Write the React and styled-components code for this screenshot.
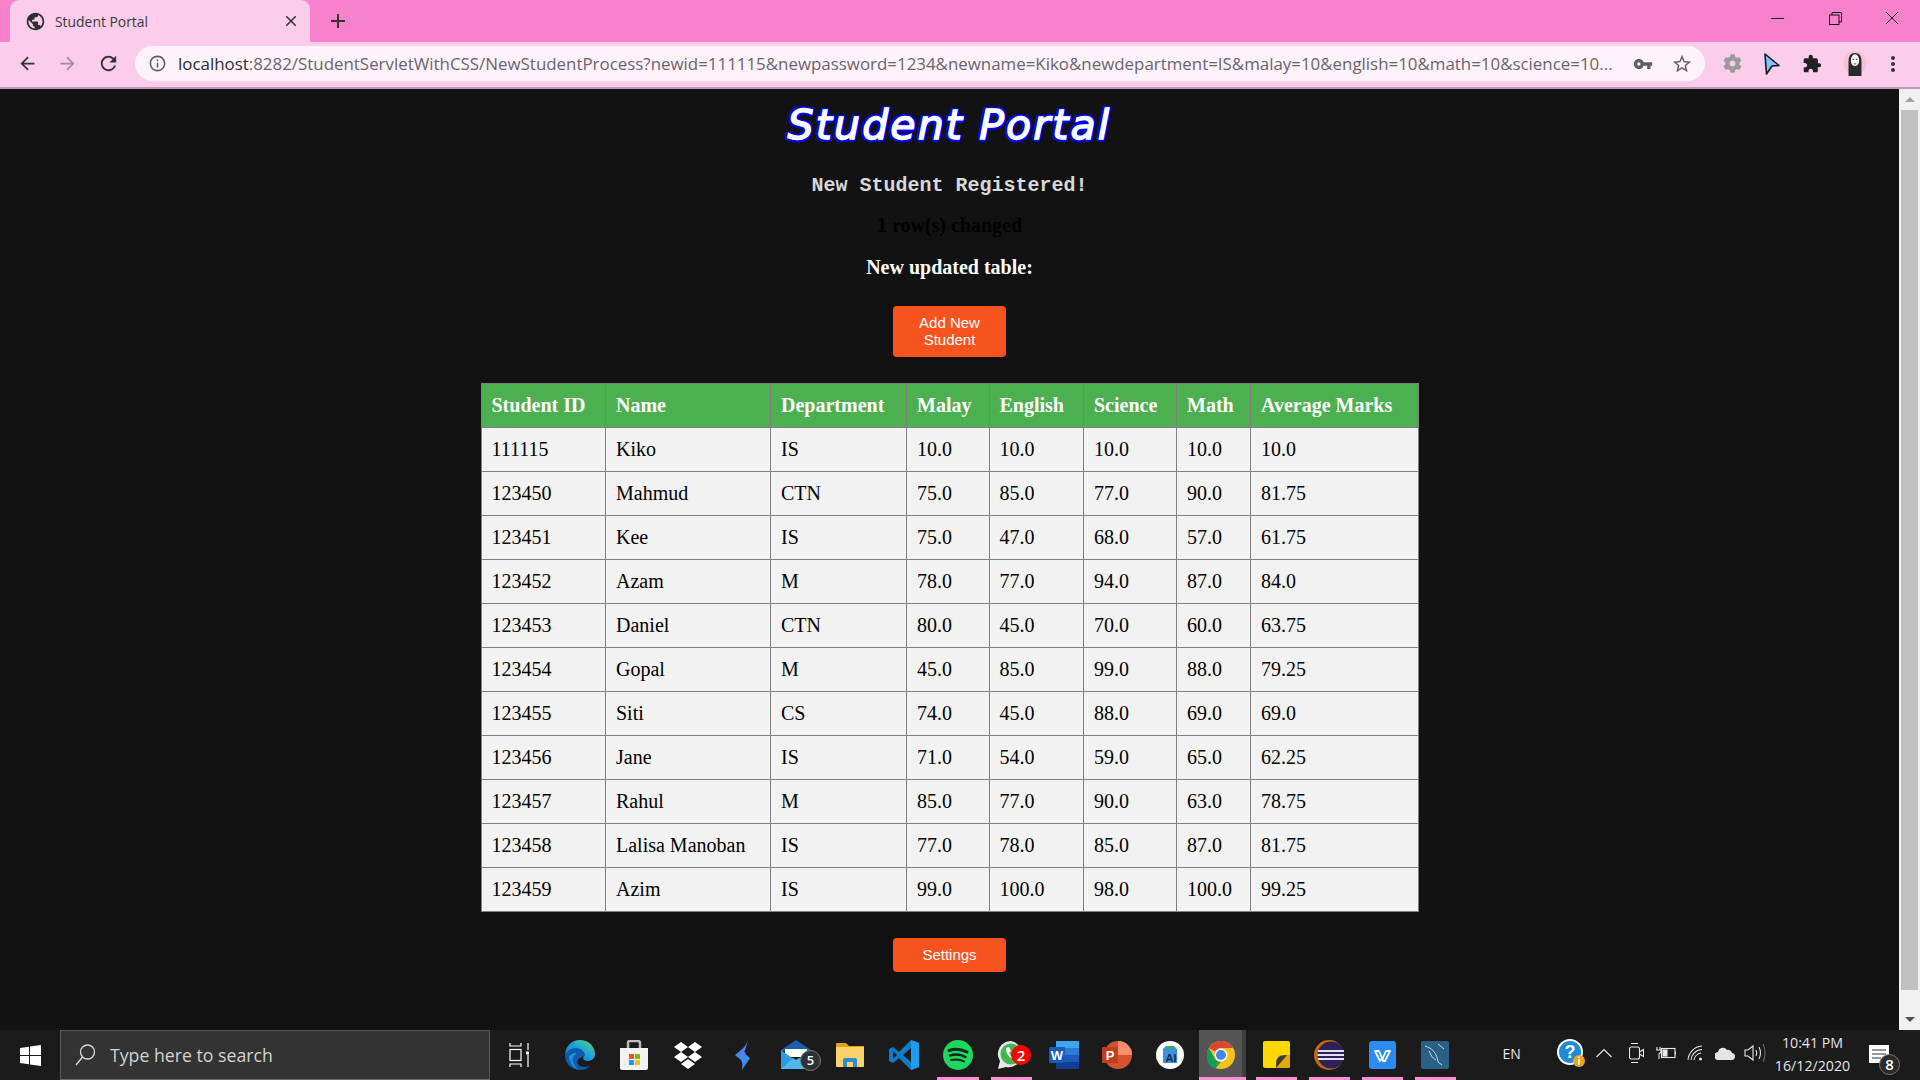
import React from "react";
import styled, { createGlobalStyle } from "styled-components";
import { MdPublic, MdClose, MdAdd, MdArrowBack, MdArrowForward, MdRefresh, MdInfoOutline, MdVpnKey, MdStarBorder, MdExtension, MdMoreVert } from "react-icons/md";
import { FaCog } from "react-icons/fa";

const Global = createGlobalStyle`
  html, body { margin: 0; padding: 0; height: 100%; overflow: hidden; background: #121212; }
  #root { height: 100%; }
  * { box-sizing: border-box; }
`;
const UI = `"Open Sans", "Noto Sans", sans-serif`;

const Screen = styled.div`display: flex; flex-direction: column; width: 1920px; height: 1080px;`;

const TabStrip = styled.div`display: flex; align-items: flex-end; height: 42px; background: #f982cc; padding-left: 10px; flex: none;`;
const Tab = styled.div`
  display: flex; align-items: center; width: 300px; height: 42px; background: #fbcdeb;
  border-radius: 9px 9px 0 0; padding: 0 10px 0 15px; color: #3a3a3a; font: 13.9px ${UI};
`;
const TabTitle = styled.span`flex: 1; margin-left: 9px;`;
const NewTab = styled.div`display: flex; height: 42px; align-items: center; margin-left: 16px; color: #333;`;
const WindowControls = styled.div`display: flex; margin-left: auto; height: 42px; align-items: center; gap: 43.5px; padding: 0 21px 6px 0;`;

const Toolbar = styled.div`
  display: flex; align-items: center; height: 47px; flex: none; background: #fbcdeb;
  border-bottom: 2px solid #bd9ab2; padding: 0 0 2px 17px;
`;
const NavButton = styled.div`display: flex; width: 40px; justify-content: flex-start; color: ${p => p.$dim ? "#a98a9f" : "#333"};`;
const Omnibox = styled.div`
  display: flex; align-items: center; width: 1570px; height: 35px; margin-left: -2px; border-radius: 18px;
  background: #fef3fb; padding: 0 12px 0 13px; flex: none;
`;
const Url = styled.div`
  flex: 1; margin-left: 11px; color: #6c6270; font: 16.9px ${UI}; white-space: nowrap; overflow: hidden;
  b { font-weight: 400; color: #2c2c2c; }
`;
const OmniIcons = styled.div`display: flex; align-items: center; gap: 18.5px; color: #5f5f5f; margin-left: 17px;`;
const Extensions = styled.div`display: flex; align-items: center; margin-left: 18px; gap: 21px; color: #222;`;

const Body = styled.div`flex: 1; display: flex; min-height: 0; background: #121212;`;
const Page = styled.main`flex: 1; display: flex; flex-direction: column; align-items: center; padding-top: 13px; overflow: hidden;`;
const Title = styled.h1`
  margin: 0; font: italic 400 41px/46px "DejaVu Sans", Verdana, sans-serif; color: #fff; letter-spacing: 2.15px;
  -webkit-text-stroke: 1.4px #fff;
  text-shadow: -2.5px 0 #00f, 2.5px 0 #00f, 0 -2.5px #00f, 0 2.5px #00f, -2px -2px #00f, 2px 2px #00f, -2px 2px #00f, 2px -2px #00f;
`;
const Registered = styled.h2`margin: 27px 0 0; font: 700 20px/22px "Liberation Mono", monospace; color: #d8d8d8;`;
const Changed = styled.h3`margin: 17px 0 0; font: 700 20px/23px "Liberation Serif", serif; color: #000;`;
const Updated = styled.h3`margin: 19px 0 0; font: 700 20px/23px "Liberation Serif", serif; color: #fff;`;
const ActionButton = styled.button`
  display: block; width: 113px; height: ${p => p.$h}px; margin-top: ${p => p.$mt}px; padding: 0 18px 2px; border: 0; border-radius: 4px;
  background: #f7531f; color: #fff; font: 15px/17px "Liberation Sans", Arial, sans-serif; text-align: center;
`;
const Table = styled.table`
  width: 937px; margin-top: 26px; border-collapse: collapse; table-layout: fixed; border: 1px solid #808080;
  font: 20px/23px "Liberation Serif", serif;
  col:nth-child(1) { width: 124.5px; } col:nth-child(2) { width: 165px; } col:nth-child(3) { width: 136px; }
  col:nth-child(4) { width: 82.5px; } col:nth-child(5) { width: 94.5px; } col:nth-child(6) { width: 93px; }
  col:nth-child(7) { width: 74px; } col:nth-child(8) { width: 167.5px; }
`;
const Th = styled.th`
  height: 44px; padding: 0 10px; text-align: left; background: #4caf50; color: #fff; font-weight: 700; border: 1px solid #808080; white-space: nowrap;
`;
const Td = styled.td`height: 44px; padding: 0 10px; background: #f2f2f2; color: #000; border: 1px solid #808080; white-space: nowrap;`;

const Scrollbar = styled.div`width: 21px; flex: none; background: #f1f1f1; display: flex; flex-direction: column; align-items: center; padding: 0 2px;`;
const ScrollArrow = styled.div`
  height: 21px; width: 100%; flex: none; display: flex; align-items: center; justify-content: center;
  &::after { content: ""; border-left: 5px solid transparent; border-right: 5px solid transparent;
    ${p => p.$down ? "border-top: 5px solid #505050;" : "border-bottom: 5px solid #a3a3a3;"} }
`;
const ScrollThumb = styled.div`width: 100%; height: 880px; background: #c1c1c1;`;
const ScrollRest = styled.div`flex: 1;`;

const Taskbar = styled.footer`display: flex; height: 50px; flex: none; background: #1b1b1b; color: #fff; font-family: ${UI};`;
const Start = styled.div`width: 60px; display: flex; align-items: center; justify-content: center;`;
const Search = styled.div`
  width: 430px; display: flex; align-items: center; gap: 14px; padding-left: 14px; background: #333;
  border: 1px solid #575757; border-bottom-color: #6a6a6a; color: #d2d2d2; font-size: 17.7px;
`;
const TaskView = styled.div`width: 63px; display: flex; align-items: center; justify-content: center; padding-right: 6px;`;
const AppSlot = styled.div`
  position: relative; width: ${p => p.$w}px; flex: none; display: flex; align-items: center; justify-content: center;
  padding: 0 ${p => p.$active ? 4 : 0}px 1px 0;
  ${p => p.$active && `&::before { content: ""; position: absolute; top: 0; bottom: 0; left: 2.500px; right: 3.500px; background: #555;
     border-right: 4px solid #3d3d3d; }`}
  ${p => p.$open && `&::after { content: ""; position: absolute; bottom: 0; height: 3px; left: ${p.$active ? 2.5 : 6}px; right: ${p.$active ? 3.5 : 6}px; background: #fb8fd0; }`}
  svg { position: relative; }
`;
const Badge = styled.span`
  position: absolute; left: ${p => p.$x}px; top: ${p => p.$y}px; width: ${p => p.$s}px; height: ${p => p.$s}px; border-radius: 50%;
  display: flex; align-items: center; justify-content: center; font: 600 ${p => p.$f}px/1 ${UI}; color: #fff;
  background: ${p => p.$bg}; border: ${p => p.$ring ? "1.5px solid #777" : "0"};
`;
const Tray = styled.div`display: flex; flex: 1;`;
const TrayItem = styled.div`
  position: relative; width: ${p => p.$w}px; flex: none; display: flex; align-items: center; justify-content: center;
  font-size: 14px; color: #e8e8e8; padding: 0 0 4px ${p => p.$pl || 0}px;
`;
const Clock = styled.div`
  width: 85px; flex: none; display: flex; flex-direction: column; align-items: center; justify-content: center; gap: 4px;
  font-size: 14.2px; line-height: 19px; color: #e4e4e4; padding-bottom: 2px;
`;
const Notification = styled.div`position: relative; flex: 1; display: flex; align-items: flex-start; padding: 15px 0 0 14px;`;

const Edge = () => (
  <svg width="30" height="30" viewBox="0 0 30 30">
    <defs>
      <linearGradient id="e1" x1="0" y1="1" x2="1" y2="0"><stop offset="0" stopColor="#0f6cc0"/><stop offset=".55" stopColor="#1ea5dc"/><stop offset="1" stopColor="#5fd66a"/></linearGradient>
    </defs>
    <path d="M15 0C23 0 30 6 30 14c0 4-3 7-7 7-3 0-5-1-5-3 0-1 1-1 1-3 0-3-3-6-8-6C6 9 2 13 0 16 0 7 6 0 15 0Z" fill="url(#e1)"/>
    <path d="M0 15c2-4 6-7 11-7 5 0 9 4 9 7 0 1-3 2-5 3-3 1-3 4-2 6 2 3 6 4 12 2-3 3-6 4-10 4C7 30 0 24 0 15Z" fill="#0d5aa8"/>
    <path d="M4 16c2-2 5-4 8-3-3 2-5 5-4 9 1 3 3 5 5 7C8 28 4 22 4 16Z" fill="#1b8fdc"/>
  </svg>
);
const Store = () => (
  <svg width="30" height="30" viewBox="0 0 30 30">
    <path d="M9 9V3q0-2 2-2h8q2 0 2 2v6" fill="none" stroke="#bdbdbd" strokeWidth="2.5"/>
    <path d="M1 8h28v20q0 2-2 2H3q-2 0-2-2Z" fill="#f3f3f3"/>
    <rect x="10" y="14" width="5" height="5" fill="#f25022"/><rect x="16" y="14" width="5" height="5" fill="#7fba00"/>
    <rect x="10" y="20" width="5" height="5" fill="#00a4ef"/><rect x="16" y="20" width="5" height="5" fill="#ffb900"/>
  </svg>
);
const Dropbox = () => (
  <svg width="30" height="28" viewBox="0 0 30 28" fill="#fff">
    <path d="M8 1l7 5-7 5-7-5ZM22 1l7 5-7 5-7-5ZM8 11l7 5-7 5-7-5ZM22 11l7 5-7 5-7-5ZM15 18l7 5-7 5-7-5Z"/>
  </svg>
);
const Bolt = () => (
  <svg width="16" height="30" viewBox="0 0 16 30">
    <path d="M14 0Q12 6 7 10L1 15l6 5q2 3 1 10l8-12-6-5Q12 8 14 0Z" fill="#3b8eea"/>
    <path d="M4 15l4-4 4 2-4 5Z" fill="#5a7df0"/>
  </svg>
);
const Mail = () => (
  <svg width="30" height="30" viewBox="0 0 30 30">
    <path d="M15 0L30 10v1H0v-1Z" fill="#1c5fae"/>
    <path d="M4 9h22v8H4Z" fill="#fff"/>
    <path d="M0 10l15 11 15-11v19H0Z" fill="#2a9de2"/>
    <path d="M0 29l12-11 3 2 3-2 12 11Z" fill="#52b7ee"/>
  </svg>
);
const Folder = () => (
  <svg width="28" height="28" viewBox="0 0 28 28">
    <path d="M0 3q0-1 1-1h9l3 3h15v4H0Z" fill="#e3a21a"/>
    <path d="M0 6h28v19q0 1-1 1H1q-1 0-1-1Z" fill="#fbd36b"/>
    <path d="M7 26v-7q0-2 2-2h10q2 0 2 2v7h-4v-5h-6v5Z" fill="#2a8bdc"/>
  </svg>
);
const VSCode = () => (
  <svg width="30" height="30" viewBox="0 0 30 30">
    <path d="M22 0l8 3v24l-8 3-12-12-6 5-4-2v-12l4-2 6 5Z" fill="#0f7cc7"/>
    <path d="M22 0l8 3v24l-8 3Z" fill="#1f9cf0"/>
    <path d="M22 8l-8 7 8 7Z" fill="#1b1b1b"/>
    <path d="M4 11l4 4-4 4Z" fill="#1b1b1b"/>
  </svg>
);
const Spotify = () => (
  <svg width="30" height="30" viewBox="0 0 30 30">
    <circle cx="15" cy="15" r="15" fill="#1ed760"/>
    <g fill="none" stroke="#12261a" strokeLinecap="round">
      <path d="M6 10.5c6-2 12-1.500 18 1.500" strokeWidth="3"/><path d="M7 15.500c5-1.500 11-1 15.500 1.500" strokeWidth="2.500"/><path d="M8 20c4.500-1 9.500-.5 13 1.500" strokeWidth="2"/>
    </g>
  </svg>
);
const WhatsApp = () => (
  <svg width="28" height="30" viewBox="0 0 28 30">
    <path d="M14 1a13 13 0 0 0-11 20L1 29l8-2A13 13 0 1 0 14 1Z" fill="#e6e6e6"/>
    <circle cx="14" cy="14" r="10.500" fill="#3fb94f"/>
    <path d="M9 8l3-1 2 4-2 2c1 2 2 3 4 4l2-2 4 2-1 3c-6 1-13-6-12-12Z" fill="#fff"/>
  </svg>
);
const Word = () => (
  <svg width="30" height="28" viewBox="0 0 30 28">
    <rect x="7" y="0" width="23" height="28" rx="1" fill="#2b7cd3"/>
    <rect x="7" y="0" width="23" height="7" fill="#41a5ee"/><rect x="7" y="14" width="23" height="7" fill="#185abd"/><rect x="7" y="21" width="23" height="7" fill="#103f91"/>
    <rect x="0" y="6" width="16" height="16" rx="1" fill="#185abd"/>
    <text x="8" y="19" textAnchor="middle" fontFamily="Liberation Sans" fontWeight="700" fontSize="13" fill="#fff">W</text>
  </svg>
);
const Ppt = () => (
  <svg width="30" height="28" viewBox="0 0 30 28">
    <circle cx="16" cy="14" r="14" fill="#d35230"/>
    <path d="M16 0a14 14 0 0 1 14 14H16Z" fill="#ff8f6b"/>
    <rect x="0" y="6" width="16" height="16" rx="1" fill="#c43e1c"/>
    <text x="8" y="19" textAnchor="middle" fontFamily="Liberation Sans" fontWeight="700" fontSize="13" fill="#fff">P</text>
  </svg>
);
const AiApp = () => (
  <svg width="28" height="28" viewBox="0 0 28 28">
    <circle cx="14" cy="14" r="14" fill="#fff"/>
    <path d="M7 8h14v14H7Z" fill="#3d8fe0"/><path d="M10 5h8l3 3H7Z" fill="#3ba776"/>
    <text x="15" y="21" textAnchor="middle" fontFamily="Liberation Sans" fontWeight="700" fontSize="11" fill="#0d2d5e">AI</text>
  </svg>
);
const Chrome = () => (
  <svg width="28" height="28" viewBox="0 0 28 28">
    <circle cx="14" cy="14" r="14" fill="#fbc116"/>
    <path d="M14 0a14 14 0 0 1 12.100 7H14a7 7 0 0 0-6.100 3.500L1.900 7A14 14 0 0 1 14 0Z" fill="#db4437"/>
    <path d="M1.900 7l6 10.500A7 7 0 0 0 14 21l-6 6.800A14 14 0 0 1 1.900 7Z" fill="#0f9d58"/>
    <circle cx="14" cy="14" r="6.500" fill="#fff"/><circle cx="14" cy="14" r="5" fill="#4285f4"/>
  </svg>
);
const Sticky = () => (
  <svg width="27" height="27" viewBox="0 0 27 27">
    <path d="M2 0h23q2 0 2 2v23q0 2-2 2H2q-2 0-2-2V2q0-2 2-2Z" fill="#ffd800"/>
    <path d="M27 14v11q0 2-2 2H13v-6q0-4 4-7Z" fill="#e2a80c"/>
    <path d="M24 14q-8 0-10 4-1 2-1 9Z" fill="#3a3a3a"/>
  </svg>
);
const Eclipse = () => (
  <svg width="30" height="30" viewBox="0 0 30 30">
    <circle cx="15" cy="15" r="15" fill="#c26a12"/>
    <circle cx="17" cy="15" r="13.500" fill="#2c2255"/>
    <path d="M4 11h26M3.500 15h27M4 19h26" stroke="#e6e2f5" strokeWidth="2"/>
  </svg>
);
const Wps = () => (
  <svg width="27" height="28" viewBox="0 0 27 28">
    <rect width="27" height="28" rx="3" fill="#2a8cf0"/>
    <path d="M6 10h4l3.500 8 3.500-8h4l-5 10h-2L13.500 17 11 20H11Z" fill="none" stroke="#fff" strokeWidth="1.800" strokeLinejoin="round"/>
  </svg>
);
const MySql = () => (
  <svg width="28" height="28" viewBox="0 0 28 28">
    <rect width="28" height="28" rx="2" fill="#2a5f86"/>
    <path d="M4 5c7 2 12 7 13 16l4 3M8 10c2 4 3 7 7 9M17 3l6 5" fill="none" stroke="#c9d6de" strokeWidth="1"/>
  </svg>
);
const Help = () => (
  <svg width="28" height="28" viewBox="0 0 28 28">
    <circle cx="13" cy="13" r="12" fill="#1c8bd8" stroke="#fff" strokeWidth="2"/>
    <text x="13" y="19" textAnchor="middle" fontFamily="Liberation Sans" fontWeight="700" fontSize="18" fill="#fff">?</text>
    <circle cx="22" cy="22" r="6" fill="#f2a21b"/>
    <path d="M22 20v6M22 17.500v1.500" stroke="#fff" strokeWidth="1.600"/>
  </svg>
);
const S = { fill: "none", stroke: "#e8e8e8", strokeWidth: 1.100 };

const apps = [
  { I: Edge, w: 54 }, { I: Store, w: 54 }, { I: Dropbox, w: 54 }, { I: Bolt, w: 54 },
  { I: Mail, w: 54, badge: { x: 31, y: 20, s: 21, f: 13, bg: "#2b3238", ring: true, t: "5" } },
  { I: Folder, w: 54 }, { I: VSCode, w: 54 }, { I: Spotify, w: 54, open: true },
  { I: WhatsApp, w: 52.5, open: true, badge: { x: 26, y: 15, s: 20, f: 15, bg: "#f00", t: "2" } },
  { I: Word, w: 53 }, { I: Ppt, w: 53 }, { I: AiApp, w: 53 }, { I: Chrome, w: 53, open: true, active: true },
  { I: Sticky, w: 53, open: true }, { I: Eclipse, w: 53, open: true }, { I: Wps, w: 53, open: true }, { I: MySql, w: 53, open: true },
];
const cols = ["Student ID", "Name", "Department", "Malay", "English", "Science", "Math", "Average Marks"];
const rows = [
  ["111115", "Kiko", "IS", "10.0", "10.0", "10.0", "10.0", "10.0"],
  ["123450", "Mahmud", "CTN", "75.0", "85.0", "77.0", "90.0", "81.75"],
  ["123451", "Kee", "IS", "75.0", "47.0", "68.0", "57.0", "61.75"],
  ["123452", "Azam", "M", "78.0", "77.0", "94.0", "87.0", "84.0"],
  ["123453", "Daniel", "CTN", "80.0", "45.0", "70.0", "60.0", "63.75"],
  ["123454", "Gopal", "M", "45.0", "85.0", "99.0", "88.0", "79.25"],
  ["123455", "Siti", "CS", "74.0", "45.0", "88.0", "69.0", "69.0"],
  ["123456", "Jane", "IS", "71.0", "54.0", "59.0", "65.0", "62.25"],
  ["123457", "Rahul", "M", "85.0", "77.0", "90.0", "63.0", "78.75"],
  ["123458", "Lalisa Manoban", "IS", "77.0", "78.0", "85.0", "87.0", "81.75"],
  ["123459", "Azim", "IS", "99.0", "100.0", "98.0", "100.0", "99.25"],
];

export default function App() {
  return (
    <Screen>
      <Global />
      <TabStrip>
        <Tab>
          <MdPublic size={21} color="#2f2f2f" />
          <TabTitle>Student Portal</TabTitle>
          <MdClose size={18} color="#333" />
        </Tab>
        <NewTab><MdAdd size={24} /></NewTab>
        <WindowControls>
          <svg width="14" height="14" viewBox="0 0 14 14"><path d="M0 7.500h13" stroke="#222" strokeWidth="1" /></svg>
          <svg width="13" height="13" viewBox="0 0 13 13" fill="none" stroke="#111" strokeWidth="1"><path d="M3 3V.5h9.500V10H10" /><rect x=".5" y="3" width="9.500" height="9.500" /></svg>
          <svg width="14" height="14" viewBox="0 0 14 14"><path d="M1 1l12 12M13 1L1 13" stroke="#222" strokeWidth="1" /></svg>
        </WindowControls>
      </TabStrip>
      <Toolbar>
        <NavButton><MdArrowBack size={21} /></NavButton>
        <NavButton $dim><MdArrowForward size={21} /></NavButton>
        <NavButton><MdRefresh size={23} /></NavButton>
        <Omnibox>
          <MdInfoOutline size={19} color="#5f5f5f" />
          <Url><b>localhost</b>:8282/StudentServletWithCSS/NewStudentProcess?newid=111115&amp;newpassword=1234&amp;newname=Kiko&amp;newdepartment=IS&amp;malay=10&amp;english=10&amp;math=10&amp;science=10...</Url>
          <OmniIcons>
            <MdVpnKey size={20} />
            <MdStarBorder size={22} />
          </OmniIcons>
        </Omnibox>
        <Extensions>
          <FaCog size={19} color="#9a9a9a" />
          <svg width="18" height="22" viewBox="0 0 17 22"><path d="M1.500 1L15.500 12.500 8.500 13 3 21Z" fill="#7fc8f0" stroke="#151528" strokeWidth="1.600" strokeLinejoin="round" /></svg>
          <MdExtension size={20} color="#222" />
          <svg width="24" height="28" viewBox="0 0 26 28"><circle cx="13" cy="13" r="12.500" fill="#f6c0d6" /><path d="M6 27V11q0-9 7-9t7 9v16Z" fill="#2a2a2a" /><ellipse cx="13" cy="10" rx="4.500" ry="6.500" fill="#f1f1f1" /><path d="M10.500 9h1.500M14 9h1.500M13 13v1.500" stroke="#222" strokeWidth="1" /></svg>
          <MdMoreVert size={24} color="#333" style={{ marginLeft: -7 }} />
        </Extensions>
      </Toolbar>
      <Body>
        <Page>
          <Title>Student Portal</Title>
          <Registered>New Student Registered!</Registered>
          <Changed>1 row(s) changed</Changed>
          <Updated>New updated table:</Updated>
          <ActionButton $h={51} $mt={27}>Add New Student</ActionButton>
          <Table>
            <colgroup>{cols.map(c => <col key={c} />)}</colgroup>
            <thead><tr>{cols.map(c => <Th key={c}>{c}</Th>)}</tr></thead>
            <tbody>
              {rows.map(r => <tr key={r[0]}>{r.map((v, i) => <Td key={i}>{v}</Td>)}</tr>)}
            </tbody>
          </Table>
          <ActionButton $h={34} $mt={26}>Settings</ActionButton>
        </Page>
        <Scrollbar>
          <ScrollArrow />
          <ScrollThumb />
          <ScrollRest />
          <ScrollArrow $down />
        </Scrollbar>
      </Body>
      <Taskbar>
        <Start>
          <svg width="21" height="21" viewBox="0 0 21 21" fill="#fff"><path d="M0 3l9-1.300V10H0ZM10 1.500L21 0v10H10ZM0 11h9v8.300L0 18ZM10 11h11v10l-11-1.500Z" /></svg>
        </Start>
        <Search>
          <svg width="21" height="24" viewBox="0 0 21 24" fill="none" stroke="#d8d8d8" strokeWidth="1.300"><circle cx="12.500" cy="9" r="7" /><path d="M7.500 14L1 22" /></svg>
          Type here to search
        </Search>
        <TaskView>
          <svg width="20" height="24" viewBox="0 0 20 24" fill="none" stroke="#fff" strokeWidth="1.200"><path d="M1 0v3h11V0M1 24v-3h11v3" /><rect x="1" y="6.500" width="11" height="11" /><path d="M19 0v7M19 12v12" /><rect x="17" y="8.500" width="3" height="3" fill="#fff" stroke="none" /></svg>
        </TaskView>
        {apps.map(({ I, w, open, active, badge }, i) => (
          <AppSlot key={i} $w={w} $open={open} $active={active}>
            <I />
            {badge && <Badge $x={badge.x} $y={badge.y} $s={badge.s} $f={badge.f} $bg={badge.bg} $ring={badge.ring}>{badge.t}</Badge>}
          </AppSlot>
        ))}
        <Tray>
          <TrayItem $w={93.5} $pl={7}>EN</TrayItem>
          <TrayItem $w={32}><Help /></TrayItem>
          <TrayItem $w={34}><svg width="16" height="10" viewBox="0 0 16 10" {...S}><path d="M.5 9L8 1.500 15.500 9" /></svg></TrayItem>
          <TrayItem $w={30}><svg width="15" height="22" viewBox="0 0 15 22" {...S}><path d="M2 1.500h7M2 20.500h7" /><rect x=".5" y="5" width="10" height="12" rx="2" /><path d="M10.500 10l4-2.500v7l-4-2.500" /></svg></TrayItem>
          <TrayItem $w={29}><svg width="20" height="14" viewBox="0 0 20 14" {...S}><rect x="5.500" y="2.500" width="13.500" height="9" /><path d="M19.500 5.500v3" /><rect x="7" y="4" width="4" height="6" fill="#e8e8e8" /><path d="M1 1v3M4 1v3M0 4h5v2l-2 2v5" /></svg></TrayItem>
          <TrayItem $w={30}><svg width="16" height="16" viewBox="0 0 16 16" {...S}><path d="M1 15C1.500 8 7 1.500 15 1M4 15c.5-5 4-10 11-10.500M7 15c.500-3 3-6.500 7-7" /><circle cx="13.500" cy="14" r="1.500" fill="#e8e8e8" stroke="none" /></svg></TrayItem>
          <TrayItem $w={30}><svg width="20" height="13" viewBox="0 0 20 13"><path d="M4 13a4 4 0 0 1-1-8 5 5 0 0 1 9-2 4 4 0 0 1 5 3 3.500 3.500 0 0 1-1 7Z" fill="#e4e4e4" /></svg></TrayItem>
          <TrayItem $w={30}><svg width="22" height="20" viewBox="0 0 22 20" {...S}><path d="M1 7v6h3l5 4V3L4 7Z" /><path d="M12 7q1.500 3 0 6M15 4q3 6 0 12" /><path d="M19 1q4 9 0 18" stroke="#666" /></svg></TrayItem>
          <Clock><span>10:41 PM</span><span>16/12/2020</span></Clock>
          <Notification>
            <svg width="20" height="18" viewBox="0 0 20 18"><path d="M0 0h20v18H0Z" fill="#fff" /><path d="M3 5h14M3 9h14M3 13h9" stroke="#333" strokeWidth="1.200" /></svg>
            <Badge $x={24} $y={24} $s={21} $f={15} $bg="#2a2a2a" $ring>8</Badge>
          </Notification>
        </Tray>
      </Taskbar>
    </Screen>
  );
}
